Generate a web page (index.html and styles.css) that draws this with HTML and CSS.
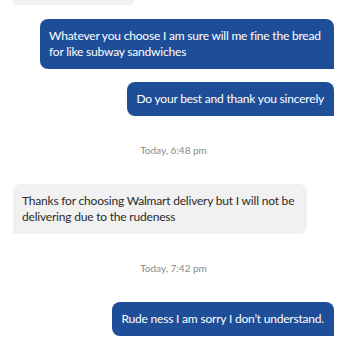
FILE: index.html
```html
<!DOCTYPE html>
<html>
<head>
<meta charset="utf-8">
<link rel="stylesheet" href="styles.css">
</head>
<body>
<div class="chat">
  <div class="bubble in partial"></div>
  <div class="bubble out first">Whatever you choose I am sure will me fine the bread for like subway sandwiches</div>
  <div class="bubble out tight">Do your best and thank you sincerely</div>
  <div class="stamp">Today, 6:48 pm</div>
  <div class="bubble in">Thanks for choosing Walmart delivery but I will not be delivering due to the rudeness</div>
  <div class="stamp">Today, 7:42 pm</div>
  <div class="bubble out">Rude ness I am sorry I don’t understand.</div>
</div>
</body>
</html>
```
FILE: styles.css
```css
html, body {
  margin: 0;
  background: #ffffff;
}
.chat {
  display: flex;
  flex-direction: column;
  padding: 0 14px 0 13px;
  font-family: Lato, "Open Sans", sans-serif;
}
.bubble {
  font-size: 12px;
  letter-spacing: -0.2px;
  line-height: 16px;
  padding: 9px 10px 9px 9px;
  max-width: 275px;
  border-radius: 8px;
}
.out {
  align-self: flex-end;
  background: #1f4e98;
  color: #ffffff;
  border-bottom-right-radius: 0;
}
.in {
  align-self: flex-start;
  background: #f1f1f1;
  color: #2b2b2b;
  border-bottom-left-radius: 0;
}
.partial {
  width: 121px;
  height: 5px;
  padding: 0;
  border-radius: 0 0 8px 0;
}
.first {
  margin-top: 14px;
}
.tight {
  margin-top: 13px;
}
.stamp {
  align-self: center;
  font-size: 10px;
  line-height: 12px;
  color: #8a8a8a;
  margin: 28px 0;
}
```
